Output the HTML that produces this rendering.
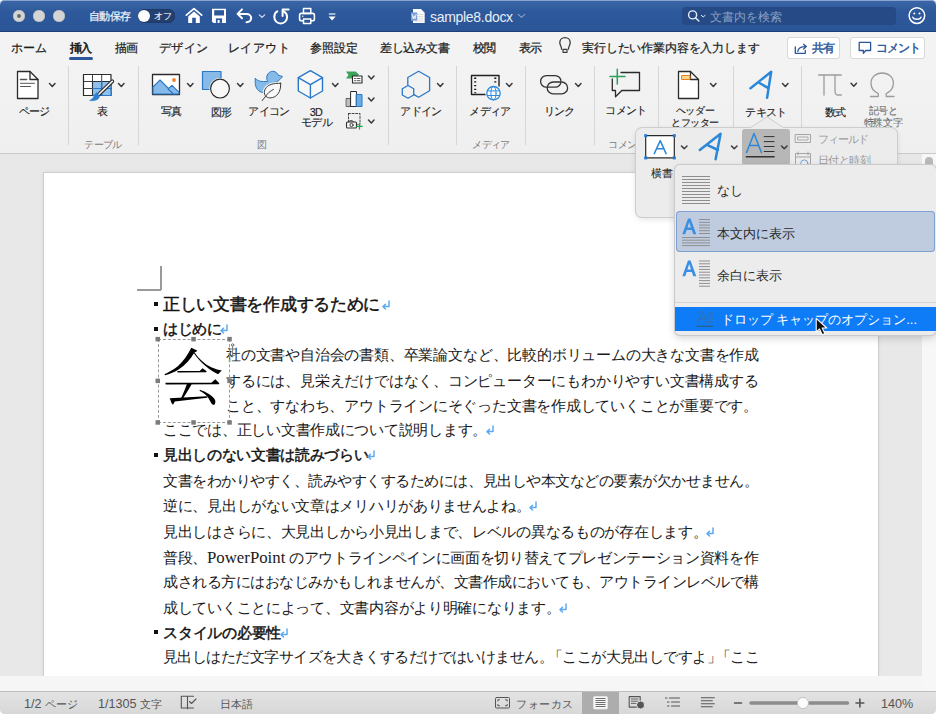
<!DOCTYPE html>
<html><head><meta charset="utf-8">
<style>
*{box-sizing:border-box}
html,body{margin:0;padding:0}
body{width:936px;height:714px;overflow:hidden;position:relative;background:#e8e8e8;font-family:"Liberation Sans",sans-serif;color:#222}
.a{position:absolute}
#title{left:0;top:0;width:936px;height:32px;background:linear-gradient(#3b66a7,#2d589b 40%,#2a5597);border-top-left-radius:4.5px;border-top-right-radius:4.5px;border-bottom:1px solid #1d3f78;box-shadow:inset 0 1px 0 rgba(200,215,240,.55)}
.tl{width:12px;height:12px;border-radius:50%;background:#d4d4d4;top:10px;box-shadow:inset 0 0 0 .5px #b0b0b0}
#tabs{left:0;top:32px;width:936px;height:30px;background:#f3f3f3}
.tab{top:39.5px;font-size:12px;letter-spacing:-0.55px;color:#1e1e1e;white-space:nowrap;line-height:16px;-webkit-text-stroke:0.25px #1e1e1e}
#ribbon{left:0;top:62px;width:936px;height:92px;background:linear-gradient(#f3f3f3,#efefef)}
#ribline{left:0;top:153px;width:936px;height:1px;background:#c9c9c9}
.sep{top:66px;width:1px;height:79px;background:#d6d6d6}
.lbl{font-size:10.8px;letter-spacing:-0.7px;color:#1e1e1e;white-space:nowrap;line-height:12px;text-align:center;-webkit-text-stroke:0.15px #1e1e1e}
.glbl{top:139px;font-size:10.3px;letter-spacing:-0.6px;color:#7a7a7a;white-space:nowrap;line-height:12px}
.chev{width:6px;height:6px;border-right:1.6px solid #404040;border-bottom:1.6px solid #404040;transform:rotate(45deg)}
#page{left:44px;top:172.5px;width:833.5px;height:503.5px;background:#fff;box-shadow:0 0 0 1px #cfcfcf,0 0 4px rgba(0,0,0,.12)}
.ln{position:absolute;font-size:14.7px;line-height:20px;color:#1a1a1a;white-space:nowrap}
.pp{font-family:"Liberation Serif",serif;font-size:16.8px;letter-spacing:0}
.j{text-align:justify;text-align-last:justify}
.h{font-weight:normal;color:#111;-webkit-text-stroke:0.45px #111}
.rt{display:inline-block;vertical-align:0px;margin-left:-2.3px}
.bul{width:4px;height:4px;background:#111}
#hscroll{left:0;top:676px;width:922px;height:15px;background:#f6f6f6}
#vscroll{left:922px;top:154px;width:14px;height:537px;background:#f7f7f7}
#status{left:0;top:690.5px;width:936px;height:23.5px;background:linear-gradient(#e3e3e3,#d8d8d8);border-top:1px solid #bdbdbd;border-bottom-left-radius:4.5px;border-bottom-right-radius:4.5px}
.st{top:697.5px;font-size:11.2px;color:#555;white-space:nowrap;line-height:13px;letter-spacing:0px}
.stn{font-size:12.6px;letter-spacing:0}
</style></head><body>
<!-- TITLE BAR -->
<div class="a" style="left:0;top:0;width:936px;height:10px;background:#fff"></div>
<div id="title" class="a"></div>
<div class="a tl" style="left:13px"></div>
<div class="a" style="left:17px;top:14px;width:4px;height:4px;border-radius:50%;background:#6a6a6a"></div>
<div class="a tl" style="left:33px"></div>
<div class="a tl" style="left:53px"></div>
<!-- TITLE ITEMS -->
<div class="a" style="left:88.5px;top:10px;font-size:10.6px;line-height:13px;color:#eef2f8;white-space:nowrap;-webkit-text-stroke:0.25px #eef2f8;letter-spacing:-0.5px">自動保存</div>
<div class="a" style="left:137.5px;top:9px;width:37.5px;height:13.5px;border-radius:7px;background:#24406f;box-shadow:inset 0 0 0 .5px #1b3360"></div>
<div class="a" style="left:137.6px;top:9.6px;width:12.4px;height:12.4px;border-radius:50%;background:#fbfbfb"></div>
<div class="a" style="left:153.5px;top:10.5px;font-size:8.6px;line-height:11px;color:#e8eef8;white-space:nowrap;-webkit-text-stroke:0.2px #e8eef8">オフ</div>
<div class="a" style="left:430px;top:7.5px;font-size:14px;line-height:18px;color:#e9eef6;white-space:nowrap;letter-spacing:-0.3px">sample8.docx</div>
<div class="a" style="left:682.2px;top:6.7px;width:213.8px;height:18.6px;border-radius:4px;background:#254a86"></div>
<div class="a" style="left:710px;top:9.5px;font-size:11.6px;line-height:14px;color:#8aa0c4;white-space:nowrap">文書内を検索</div>
<svg class="a" style="left:0;top:0" width="936" height="32" viewBox="0 0 936 32">
<g fill="none" stroke-linecap="round" stroke-linejoin="round">
<!-- home -->
<path d="M186.3 15.2L194 8.6L201.7 15.2" stroke="#fff" stroke-width="1.7"/>
<path d="M188.2 16.5L194 11.6L199.8 16.5V22.9H195.8V17.8H192.2V22.9H188.2Z" fill="#fff" stroke="none"/>
<!-- save -->
<path d="M212 8.8H226V22.9H213.5L212 21.4Z" fill="#fff"/>
<rect x="214.2" y="10.2" width="9.8" height="5.3" fill="#2c579a"/>
<path d="M215.9 22.9V18.4H222.1V22.9Z" fill="#2c579a"/>
<rect x="217.6" y="20" width="2" height="2.9" fill="#fff"/>
<!-- undo -->
<path d="M242 9.4L237.6 13.9L242 18.2" stroke="#fff" stroke-width="2"/>
<path d="M238 13.9H246.5C249.2 13.9 251.2 15.8 251.2 18.1C251.2 20.4 249.2 22.2 246.5 22.2" stroke="#fff" stroke-width="2"/>
<path d="M259.3 14.8L262 17.4L264.7 14.8" stroke="#dfe6f2" stroke-width="1.1"/>
<!-- redo -->
<path d="M277.3 11.4C275.2 12.5 274.3 14.6 274.3 17.1C274.3 20.7 277.2 23.5 280.7 23.5C284.2 23.5 287.1 20.7 287.1 17.1C287.1 14.6 285.8 12.4 283.8 11.3" stroke="#fff" stroke-width="2"/>
<path d="M282.6 16V9.4H288.6" stroke="#fff" stroke-width="2"/>
<!-- print -->
<rect x="303.5" y="8.5" width="7.3" height="5" stroke="#fff" stroke-width="1.5"/>
<rect x="299.6" y="13.4" width="14.8" height="7.4" rx="1.8" stroke="#fff" stroke-width="1.6"/>
<rect x="303.5" y="19" width="7.3" height="4.4" fill="#2c579a" stroke="#fff" stroke-width="1.5"/>
<circle cx="302.8" cy="16.2" r="0.7" fill="#fff"/>
<!-- customize -->
<path d="M328.8 14H335.4" stroke="#c8d4e8" stroke-width="1.5" stroke-linecap="butt"/>
<path d="M328.6 16.4H335.6L332.1 20.4Z" fill="#fff"/>
<!-- doc icon -->
<path d="M413 9H421L424.7 12.7V23H413Z" fill="#fbfbfb"/>
<path d="M416.5 14.5H423M416.5 16.7H423M416.5 18.9H423M416.5 21.1H423" stroke="#d8d8d8" stroke-width="0.9"/>
<rect x="411" y="12.4" width="6.2" height="8.3" fill="#7c9ed3"/>
<path d="M412.2 14.5L413.2 18.8L414.1 15.8L415 18.8L416 14.5" stroke="#fff" stroke-width="0.8"/>
<path d="M518.2 14.3L521.5 17.4L524.8 14.3" stroke="#8aa3cb" stroke-width="1.1"/>
<!-- search -->
<circle cx="692.6" cy="14.9" r="4" stroke="#e8eef8" stroke-width="1.4"/>
<path d="M695.5 17.8L698.8 21" stroke="#e8eef8" stroke-width="1.5"/>
<path d="M701.3 15.3L703.2 17L705.1 15.3" stroke="#e8eef8" stroke-width="1"/>
<!-- smiley -->
<circle cx="916.9" cy="15.6" r="7.8" stroke="#fff" stroke-width="1.5"/>
<circle cx="914.3" cy="13.4" r="1" fill="#fff"/>
<circle cx="919.5" cy="13.4" r="1" fill="#fff"/>
<path d="M912.8 17.2C914 20 919.8 20 921 17.2" stroke="#fff" stroke-width="1.4"/>
</g>
</svg>

<!-- /TITLE ITEMS -->

<!-- TABS -->
<div id="tabs" class="a"></div>
<div class="a tab" id="tab0" style="left:11.00px;letter-spacing:0.200px">ホーム</div>
<div class="a tab" id="tab1" style="left:69.5px;letter-spacing:-1.2px;-webkit-text-stroke:0.55px #1a1a1a">挿入</div>
<div class="a" style="left:69px;top:57px;width:24px;height:3px;border-radius:2px;background:#2b579a"></div>
<div class="a tab" id="tab2" style="left:115.00px;letter-spacing:-1.300px">描画</div>
<div class="a tab" id="tab3" style="left:159.00px;letter-spacing:0.367px">デザイン</div>
<div class="a tab" id="tab4" style="left:228.00px;letter-spacing:0.450px">レイアウト</div>
<div class="a tab" id="tab5" style="left:310.00px;letter-spacing:0.033px">参照設定</div>
<div class="a tab" id="tab6" style="left:380.00px;letter-spacing:-0.500px">差し込み文書</div>
<div class="a tab" id="tab7" style="left:473px;letter-spacing:-1.3px">校閲</div>
<div class="a tab" id="tab8" style="left:519.00px;letter-spacing:-1.300px">表示</div>
<div class="a tab" id="tab9" style="left:582.00px;letter-spacing:-0.157px">実行したい作業内容を入力します</div>

<!-- TABS EXTRA -->
<div class="a" style="left:786.5px;top:36.6px;width:53px;height:22.7px;border-radius:3px;background:#fff;box-shadow:inset 0 0 0 1px #d9d9d9"></div>
<div class="a" style="left:850.3px;top:36.6px;width:75.2px;height:22.7px;border-radius:3px;background:#fff;box-shadow:inset 0 0 0 1px #d9d9d9"></div>
<div class="a" style="left:812.3px;top:40.5px;font-size:12px;line-height:15px;color:#2b579a;white-space:nowrap;-webkit-text-stroke:0.45px #2b579a;letter-spacing:-1px">共有</div>
<div class="a" style="left:875.5px;top:40.5px;font-size:12px;line-height:15px;color:#2b579a;white-space:nowrap;-webkit-text-stroke:0.45px #2b579a;letter-spacing:-1px">コメント</div>
<svg class="a" style="left:0;top:30px" width="936" height="32" viewBox="0 30 936 32">
<g fill="none" stroke-linecap="round" stroke-linejoin="round">
<path d="M561.6 49.2C561.6 46.5 559.8 45.4 559.8 42.5C559.8 39.6 562.2 37.6 565 37.6C567.8 37.6 570.2 39.6 570.2 42.5C570.2 45.4 568.4 46.5 568.4 49.2" stroke="#3a3a3a" stroke-width="1.3"/>
<rect x="563" y="49.3" width="4" height="3" stroke="#3a3a3a" stroke-width="1.2"/>
<path d="M795.3 46.8V53.3H805.3V50.3" stroke="#2b579a" stroke-width="1.3"/>
<path d="M797.8 51.3C798.3 47.6 800.8 46.6 805.6 46.6" stroke="#2b579a" stroke-width="1.3"/>
<path d="M803.6 44.3L806.3 46.6L803.6 49" stroke="#2b579a" stroke-width="1.3"/>
<path d="M859.2 42.4H870.6V50.5H865.7L863.4 53.3V50.5H859.2Z" stroke="#2b579a" stroke-width="1.3"/>
</g>
</svg>

<!-- /TABS EXTRA -->
<!-- RIBBON -->
<div id="ribbon" class="a"></div>
<div id="ribline" class="a"></div>
<!-- RIBBON ITEMS -->
<div class="a lbl" style="left:-6px;top:104.8px;width:80px">ページ</div>
<div class="a lbl" style="left:62.5px;top:105px;width:80px">表</div>
<div class="a lbl" style="left:131px;top:105px;width:80px">写真</div>
<div class="a lbl" style="left:181.5px;top:105.5px;width:80px">図形</div>
<div class="a lbl" style="left:229px;top:104.5px;width:80px">アイコン</div>
<div class="a lbl" style="left:276px;top:105.5px;width:80px">3D</div>
<div class="a lbl" style="left:276.5px;top:115.7px;width:80px">モデル</div>
<div class="a lbl" style="left:381px;top:105px;width:80px">アドイン</div>
<div class="a lbl" style="left:450px;top:105px;width:80px">メディア</div>
<div class="a lbl" style="left:519px;top:105px;width:80px">リンク</div>
<div class="a lbl" style="left:586px;top:104px;width:80px">コメント</div>
<div class="a lbl" style="left:655px;top:105.3px;width:80px;font-size:10.2px;letter-spacing:-0.4px">ヘッダー</div>
<div class="a lbl" style="left:655px;top:116.5px;width:80px;font-size:10.2px;letter-spacing:-0.4px">とフッター</div>
<div class="a lbl" style="left:726px;top:105.7px;width:80px">テキスト</div>
<div class="a lbl" style="left:795.5px;top:105.7px;width:80px">数式</div>
<div class="a lbl" style="left:843px;top:105.3px;width:80px;color:#9a9a9a;font-size:10.2px;letter-spacing:-0.4px">記号と</div>
<div class="a lbl" style="left:843px;top:116.5px;width:80px;color:#9a9a9a;font-size:10.2px;letter-spacing:-0.4px">特殊文字</div>
<div class="a glbl" style="left:63px;top:138.5px;width:80px;text-align:center">テーブル</div>
<div class="a glbl" style="left:222px;top:138.5px;width:80px;text-align:center">図</div>
<div class="a glbl" style="left:451px;top:138.5px;width:80px;text-align:center">メディア</div>
<div class="a glbl" style="left:587px;top:138.5px;width:80px;text-align:center">コメント</div>
<div class="a sep" style="left:68.0px"></div>
<div class="a sep" style="left:137.5px"></div>
<div class="a sep" style="left:387.5px"></div>
<div class="a sep" style="left:456.0px"></div>
<div class="a sep" style="left:525.0px"></div>
<div class="a sep" style="left:594.0px"></div>
<div class="a sep" style="left:658.0px"></div>
<div class="a sep" style="left:732.5px"></div>
<div class="a sep" style="left:801.0px"></div>
<svg class="a" style="left:0;top:0" width="936" height="160" viewBox="0 0 936 160">
<g fill="none" stroke-linecap="round" stroke-linejoin="round">
<!-- page icon -->
<path d="M17.5 71.5H30L38 79.5V98.5H17.5Z" fill="#fff" stroke="#2b2b2b" stroke-width="1.3"/>
<path d="M30 71.5V79.5H38" stroke="#2b2b2b" stroke-width="1.3"/>
<path d="M20.5 79.5H26.5" stroke="#555" stroke-width="1.6"/>
<path d="M20.5 83.3H34.5M20.5 86.5H30.5" stroke="#555" stroke-width="1"/>
<!-- table icon -->
<rect x="83.5" y="74.5" width="27.5" height="21" fill="#fff" stroke="#2b2b2b" stroke-width="1.2"/>
<rect x="92.5" y="81.5" width="18.5" height="14" fill="#8ec0ee" stroke="#2a78c8" stroke-width="1.2"/>
<path d="M92.5 74.5V95.5M101.7 74.5V95.5M83.5 81.5H111M83.5 88.5H111" stroke="#2b2b2b" stroke-width="0.9"/>
<path d="M101.7 81.5V95.5M92.5 88.5H111" stroke="#2a78c8" stroke-width="1"/>
<path d="M98.3 94.8L112.3 81.3" stroke="#333" stroke-width="3.8"/><path d="M98.3 94.8L112.3 81.3" stroke="#fff" stroke-width="1.5"/>
<path d="M96.6 93C99.6 94.6 100 97.6 97.8 99.2C95.6 100.6 92.2 100.9 89.6 100.5C92 99.3 93.4 97.8 94.2 95.8C94.7 94.4 95.5 93.4 96.6 93Z" fill="#2f7fd0" stroke="#2f7fd0" stroke-width="0.6"/>
<!-- photo icon -->
<rect x="152.5" y="74.5" width="27" height="20" fill="#fff" stroke="#2b2b2b" stroke-width="1.3"/>
<path d="M153 87L160 80L174 94H153Z" fill="#86bbe9" stroke="#2a78c8" stroke-width="1.1"/>
<path d="M168 89L172 85.3L179 92.3V94H173.5Z" fill="#86bbe9" stroke="#2a78c8" stroke-width="1.1"/>
<circle cx="174" cy="80" r="2" fill="#f0883a"/>
<!-- shapes icon -->
<rect x="202.5" y="71.5" width="18.5" height="18" fill="#86bbe9" stroke="#2a78c8" stroke-width="1.2"/>
<circle cx="220" cy="88.6" r="10.6" fill="#f3f3f3" stroke="none"/>
<circle cx="220" cy="88.6" r="9.4" fill="#f8f8f8" stroke="#2b2b2b" stroke-width="1.2"/>
<!-- icons (duck + leaf) -->
<path d="M255.4 78.4C256.5 80.2 259.5 81.6 263.5 81.6L267.6 81.4C266.9 80.2 266.6 78.8 266.7 77.3C267 74 269.6 71.3 272.8 71.3C275.5 71.3 277.6 73 278.3 75.3L282.4 76.4C281.2 78.6 279 80.6 276.5 81.8C274 83 270 84 267 86.5C265 88.5 264.5 91 262.8 92.6C258.5 91.8 255.6 88.3 255.3 84Z" fill="#86bbe9" stroke="#2a78c8" stroke-width="1" stroke-linejoin="round"/>
<path d="M280.7 83.3C273.5 83.1 267.4 84.4 265 89.5C263 94 265.8 98 270.2 97.9C277 97.8 281.2 91.5 280.7 83.3Z" fill="#f8f8f8" stroke="#f3f3f3" stroke-width="3"/>
<path d="M280.7 83.3C273.5 83.1 267.4 84.4 265 89.5C263 94 265.8 98 270.2 97.9C277 97.8 281.2 91.5 280.7 83.3Z" fill="#f8f8f8" stroke="#3a3a3a" stroke-width="1"/>
<path d="M273.4 89.4C270 91.2 267.5 93.5 266 95.8L262.2 100.6" stroke="#3a3a3a" stroke-width="1"/>
<!-- 3D cube -->
<path d="M310.4 70.7L322.5 77.7V91L310.4 98L298.3 91V77.7Z" fill="#f8f8f8" stroke="#2a78c8" stroke-width="1.4"/>
<path d="M298.3 77.7L310.4 84.7L322.5 77.7M310.4 84.7V98" stroke="#2a78c8" stroke-width="1.4"/>
<!-- smartart -->
<path d="M346 71.5H355.5L359 74.5L355.5 78.5H346L348.5 75Z" fill="#3aa357" stroke="none"/>
<rect x="352.5" y="76" width="9.5" height="7" fill="#fff" stroke="#2b2b2b" stroke-width="1.1"/>
<path d="M354.5 78.5H355.5M357 78.5H360M354.5 80.7H355.5M357 80.7H360" stroke="#2b2b2b" stroke-width="0.8"/>
<!-- chart -->
<rect x="346.5" y="98.5" width="4.5" height="8" fill="#bdbdbd" stroke="#555" stroke-width="0.9"/>
<rect x="351" y="91.5" width="5.5" height="15" fill="#fff" stroke="#2b2b2b" stroke-width="1"/>
<rect x="356.5" y="94.5" width="5.5" height="12" fill="#6aaee8" stroke="#2a78c8" stroke-width="1"/>
<!-- screenshot -->
<rect x="348.5" y="113.5" width="11.5" height="11" fill="none" stroke="#444" stroke-width="1" stroke-dasharray="2 1.6"/>
<rect x="346.5" y="122" width="10" height="6" rx="1" fill="#f3f3f3" stroke="#333" stroke-width="1.1"/>
<path d="M348.5 122L349.5 120.8H352.5L353.5 122" stroke="#333" stroke-width="1"/>
<circle cx="351.5" cy="125" r="1.6" stroke="#333" stroke-width="0.9"/>
<path d="M359.5 123.5V129M356.8 126.3H362.2" stroke="#1fa64a" stroke-width="1.3"/>
<!-- add-in -->
<path d="M407.8 84.5V77.5L418.6 71.3L429.6 77.5V90.8L418.6 97.2L414 94.6" stroke="#2a78c8" stroke-width="1.3"/>
<path d="M408 85.5L413.7 88.7V95L408 98.2L402.3 95V88.7Z" stroke="#2a78c8" stroke-width="1.3"/>
<!-- media -->
<path d="M492 94.5H471.5V75.5H499V86" stroke="#222" stroke-width="1.4"/>
<path d="M475.2 77.6V78.9M475.2 81.3V82.6M475.2 85V86.3M475.2 88.7V90M475.2 92.2V93.3M495.3 77.6V78.9M495.3 81.3V82.6" stroke="#111" stroke-width="2" stroke-linecap="butt"/>
<circle cx="493.5" cy="93.2" r="8.2" fill="#f3f3f3" stroke="none"/>
<circle cx="493.5" cy="93.2" r="6.7" fill="#fff" stroke="#2f8ae0" stroke-width="1.3"/>
<ellipse cx="493.5" cy="93.2" rx="2.6" ry="6.7" stroke="#2f8ae0" stroke-width="1"/>
<path d="M487.3 90.9H499.7M487.3 95.5H499.7" stroke="#2f8ae0" stroke-width="1"/>
<!-- link -->
<rect x="540.6" y="75.6" width="20.4" height="11.6" rx="5.8" stroke="#333" stroke-width="1.3"/>
<rect x="547.2" y="82" width="20.4" height="11.8" rx="5.9" fill="none" stroke="#f3f3f3" stroke-width="2.6" stroke-dasharray="0 9 30 100"/>
<rect x="547.2" y="82" width="20.4" height="11.8" rx="5.9" stroke="#333" stroke-width="1.3"/>
<!-- comment -->
<path d="M621 72.5H639.5V90.5H621.8L615.5 96.8V90.5H612.3V79" stroke="#2b2b2b" stroke-width="1.3"/>
<path d="M610 76.4H625M617.3 69.3V84" stroke="#27a35a" stroke-width="1.5"/>
<!-- header footer -->
<path d="M678.5 71.5H690.5L698.5 79.5V98.5H678.5Z" fill="#fff" stroke="#2b2b2b" stroke-width="1.3"/>
<path d="M690.5 71.5V79.5H698.5" stroke="#2b2b2b" stroke-width="1.3"/>
<rect x="682" y="75.5" width="8" height="4" fill="#f7d88a" stroke="#e8801e" stroke-width="1"/>
<!-- text A -->
<path d="M750.5 88.2L771.2 71.8L767.1 97.8M758.6 82.5L768.3 88.2" stroke="#2b88d8" stroke-width="2.5"/>
<!-- pi -->
<path d="M818.6 75H841.3M824 75V95M835 75V91.5C835 93.8 836.5 95 838.5 95H841.3" stroke="#9c9c9c" stroke-width="1.3"/>
<!-- omega -->
<path d="M870.5 96.5H878.3V93.6C874 91.5 871 87.5 871 83.2C871 77 876 73 882.2 73C888.4 73 893.4 77 893.4 83.2C893.4 87.5 890.4 91.5 886.2 93.6V96.5H894" stroke="#9c9c9c" stroke-width="1.3"/>
<!-- chevrons -->
<g stroke="#3a3a3a" stroke-width="1.5">
<path d="M49.5 83.5L52.3 86.5L55 83.5"/>
<path d="M118.5 83.5L121.3 86.5L124 83.5"/>
<path d="M187.5 83.5L190.3 86.5L193 83.5"/>
<path d="M237.5 83.5L240.3 86.5L243 83.5"/>
<path d="M332.5 83.5L335.3 86.5L338 83.5"/>
<path d="M368.5 76L371.3 79L374 76"/>
<path d="M368.5 98L371.3 101L374 98"/>
<path d="M368.5 120L371.3 123L374 120"/>
<path d="M437.5 83.5L440.3 86.5L443 83.5"/>
<path d="M506.5 83.5L509.3 86.5L512 83.5"/>
<path d="M575.5 83.5L578.3 86.5L581 83.5"/>
<path d="M710.5 83.5L713.3 86.5L716 83.5"/>
<path d="M782.5 83.5L785.3 86.5L788 83.5"/>
<path d="M851 83.3L853.8 86.3L856.5 83.3"/>
</g>
</g>
</svg>

<!-- /RIBBON ITEMS -->

<!-- DOC AREA -->
<div id="page" class="a"></div>
<div id="hscroll" class="a"></div>
<div id="vscroll" class="a"></div>
<div class="a" style="left:925px;top:157px;width:8px;height:140px;border-radius:4px;background:#b9b9b9"></div>


<!-- DOCUMENT TEXT -->
<div class="a" style="left:137px;top:289px;width:24px;height:1.5px;background:#9a9a9a"></div>
<div class="a" style="left:160px;top:266px;width:1.5px;height:24px;background:#9a9a9a"></div>
<div class="a bul" style="left:154px;top:302px"></div>
<div class="a bul" style="left:154px;top:327px"></div>
<div class="a bul" style="left:154px;top:453px"></div>
<div class="a bul" style="left:154px;top:630px"></div>
<!-- DOCLINES -->
<div class="ln h" style="left:163px;top:295px;font-size:16.7px"><span style="letter-spacing:-0.308px">正しい文書を作成するために</span><svg class="rt" style="margin-left:1px" width="10" height="10" viewBox="0 0 10 10"><path d="M8 1V6.6H2.2M4.5 4.2L2 6.6L4.5 9" fill="none" stroke="#5eaaf2" stroke-width="1.5" stroke-linecap="round" stroke-linejoin="round"/></svg></div>
<div class="ln h" style="left:163px;top:319px;font-size:14.7px"><span style="letter-spacing:-0.375px">はじめに</span><svg class="rt" width="10" height="10" viewBox="0 0 10 10"><path d="M8 1V6.6H2.2M4.5 4.2L2 6.6L4.5 9" fill="none" stroke="#5eaaf2" stroke-width="1.5" stroke-linecap="round" stroke-linejoin="round"/></svg></div>
<div class="ln" style="left:226px;top:345px;font-size:14.7px"><span style="letter-spacing:-0.194px">社の文書や自治会の書類、卒業論文など、比較的ボリュームの大きな文書を作成</span></div>
<div class="ln" style="left:226px;top:371px;font-size:14.7px"><span style="letter-spacing:-0.208px">するには、見栄えだけではなく、コンピューターにもわかりやすい文書構成する</span></div>
<div class="ln" style="left:226px;top:396px;font-size:14.7px"><span style="letter-spacing:-0.222px">こと、すなわち、アウトラインにそぐった文書を作成していくことが重要です。</span></div>
<div class="ln" style="left:163px;top:420px;font-size:14.7px"><span style="letter-spacing:-0.273px">ここでは、正しい文書作成について説明します。</span><svg class="rt" width="10" height="10" viewBox="0 0 10 10"><path d="M8 1V6.6H2.2M4.5 4.2L2 6.6L4.5 9" fill="none" stroke="#5eaaf2" stroke-width="1.5" stroke-linecap="round" stroke-linejoin="round"/></svg></div>
<div class="ln h" style="left:163px;top:445px;font-size:14.7px"><span style="letter-spacing:-0.321px">見出しのない文書は読みづらい</span><svg class="rt" width="10" height="10" viewBox="0 0 10 10"><path d="M8 1V6.6H2.2M4.5 4.2L2 6.6L4.5 9" fill="none" stroke="#5eaaf2" stroke-width="1.5" stroke-linecap="round" stroke-linejoin="round"/></svg></div>
<div class="ln" style="left:163px;top:471px;font-size:14.7px"><span style="letter-spacing:-0.476px">文書をわかりやすく、読みやすくするためには、見出しや本文などの要素が欠かせません。</span></div>
<div class="ln" style="left:163px;top:496px;font-size:14.7px"><span style="letter-spacing:-0.300px">逆に、見出しがない文章はメリハリがありませんよね。</span><svg class="rt" width="10" height="10" viewBox="0 0 10 10"><path d="M8 1V6.6H2.2M4.5 4.2L2 6.6L4.5 9" fill="none" stroke="#5eaaf2" stroke-width="1.5" stroke-linecap="round" stroke-linejoin="round"/></svg></div>
<div class="ln" style="left:163px;top:521.5px;font-size:14.7px"><span style="letter-spacing:-0.284px">見出しはさらに、大見出しから小見出しまで、レベルの異なるものが存在します。</span><svg class="rt" width="10" height="10" viewBox="0 0 10 10"><path d="M8 1V6.6H2.2M4.5 4.2L2 6.6L4.5 9" fill="none" stroke="#5eaaf2" stroke-width="1.5" stroke-linecap="round" stroke-linejoin="round"/></svg></div>
<div class="ln" style="left:163px;top:547.5px;font-size:14.7px"><span style="letter-spacing:-0.331px">普段、<span class="pp">PowerPoint</span> のアウトラインペインに画面を切り替えてプレゼンテーション資料を作</span></div>
<div class="ln" style="left:163px;top:572px;font-size:14.7px"><span style="letter-spacing:-0.463px">成される方にはおなじみかもしれませんが、文書作成においても、アウトラインレベルで構</span></div>
<div class="ln" style="left:163px;top:597.5px;font-size:14.7px"><span style="letter-spacing:-0.278px">成していくことによって、文書内容がより明確になります。</span><svg class="rt" width="10" height="10" viewBox="0 0 10 10"><path d="M8 1V6.6H2.2M4.5 4.2L2 6.6L4.5 9" fill="none" stroke="#5eaaf2" stroke-width="1.5" stroke-linecap="round" stroke-linejoin="round"/></svg></div>
<div class="ln h" style="left:163px;top:622.5px;font-size:14.7px"><span style="letter-spacing:-0.250px">スタイルの必要性</span><svg class="rt" width="10" height="10" viewBox="0 0 10 10"><path d="M8 1V6.6H2.2M4.5 4.2L2 6.6L4.5 9" fill="none" stroke="#5eaaf2" stroke-width="1.5" stroke-linecap="round" stroke-linejoin="round"/></svg></div>
<div class="ln" style="left:163px;top:647px;font-size:14.7px"><span style="letter-spacing:-0.550px">見出しはただ文字サイズを大きくするだけではいけません<span style="letter-spacing:-6px">。</span>「ここが大見出しですよ<span style="letter-spacing:-6px">」</span>「ここ</span></div>
<!-- /DOCLINES -->
<!-- DROP CAP FRAME -->
<div class="a" style="left:157.7px;top:339px;width:72px;height:83.5px;border:1px dashed #9a9a9a"></div>
<svg class="a" style="left:160px;top:344px" width="66" height="66" viewBox="0 0 714 714"><g fill="#000">
<path d="M338 40L402 70L395 80L372 92C330 170 270 230 205 272C160 300 105 325 55 338L48 326C100 305 150 275 195 238C250 190 300 120 338 40Z"/>
<path d="M372 88C420 160 480 215 560 255C600 272 640 282 668 288L628 328C560 292 500 250 450 200C415 165 385 125 362 95Z"/>
<path d="M188 292L430 292L460 262L505 296L500 306L190 308Z"/>
<path d="M58 420L555 420L598 382L642 424L638 436L62 438Z"/>
<path d="M292 430L345 430C320 480 280 540 250 588L228 588C250 535 275 480 292 430Z"/>
<path d="M105 588L505 565L512 582L160 622L140 658L126 640Z"/>
<path d="M432 496C500 520 560 555 590 595C605 618 602 645 585 660C565 662 552 640 540 615C520 570 480 530 428 506Z"/>
</g></svg>
<svg class="a" style="left:150px;top:330px" width="100" height="100" viewBox="150 330 100 100">
<g fill="#7b7b7b"><rect x="155.5" y="336.9" width="4.5" height="4.5"/><rect x="191.3" y="336.9" width="4.5" height="4.5"/><rect x="227.3" y="336.9" width="4.5" height="4.5"/><rect x="155.5" y="378.6" width="4.5" height="4.5"/><rect x="227.3" y="378.6" width="4.5" height="4.5"/><rect x="155.5" y="420.2" width="4.5" height="4.5"/><rect x="191.3" y="420.2" width="4.5" height="4.5"/><rect x="227.3" y="420.2" width="4.5" height="4.5"/></g>
<g fill="none" stroke="#6a6a6a" stroke-width="0.9" stroke-linecap="round"><circle cx="232.6" cy="345" r="1.2"/><path d="M232.6 346.2V357M229.5 349H235.7M229 353.5C229.5 356.5 235.7 356.5 236.2 353.5"/></g>
</svg>
<!-- STATUS -->
<div class="a" style="left:0;top:704px;width:936px;height:10px;background:#fff"></div>
<div id="status" class="a"></div>
<!-- STATUS EXTRA -->
<div class="a" style="left:582.4px;top:691.5px;width:36.3px;height:22.5px;background:#adadad"></div>
<svg class="a" style="left:0;top:690px" width="936" height="24" viewBox="0 690 936 24">
<g fill="none" stroke-linecap="round" stroke-linejoin="round">
<!-- proofing -->
<path d="M187.5 697V708.7M181.3 696.3H187.5V708H181.3Z" stroke="#555" stroke-width="1.1"/>
<path d="M187.5 696.3H193.5M187.5 708H193.5" stroke="#555" stroke-width="1.1"/>
<path d="M189.5 701.5L191.5 703.5L196 699" stroke="#555" stroke-width="1.1"/>
<!-- focus -->
<rect x="495.5" y="697.5" width="14" height="10.5" rx="1" stroke="#555" stroke-width="1"/>
<path d="M497.8 701V699.8H499.5M505.5 699.8H507.2V701M507.2 704.5V705.7H505.5M499.5 705.7H497.8V704.5" stroke="#555" stroke-width="1"/>
<!-- print layout (active) -->
<rect x="593.5" y="696.5" width="14" height="12.5" rx="1.2" fill="#f6f6f6" stroke="#e6e6e6" stroke-width="0.8"/>
<path d="M595.5 698.5H605.5M595.5 700.5H605.5M595.5 702.5H605.5M595.5 704.5H605.5M595.5 706.5H605.5" stroke="#6f6f6f" stroke-width="1" stroke-linecap="butt"/>
<!-- web layout -->
<rect x="629.2" y="696.6" width="11" height="10.5" stroke="#555" stroke-width="1.1"/>
<path d="M631.3 699H638M631.3 701.2H638M631.3 703.4H636" stroke="#555" stroke-width="0.9"/>
<circle cx="640.5" cy="705" r="4" fill="#555" stroke="#e2e2e2" stroke-width="1"/>
<!-- outline -->
<path d="M665.5 698H667M669.5 698H679.5M667.5 702H669M671.5 702H679.5M667.5 706H669M671.5 706H679.5" stroke="#555" stroke-width="1.1"/>
<!-- draft -->
<path d="M701.3 697.8H714.3M701.3 700.8H712.3M701.3 703.8H714.3M701.3 706.8H712.3" stroke="#555" stroke-width="1.1"/>
<!-- zoom -->
<path d="M734.5 703H741.5" stroke="#555" stroke-width="1.6"/>
<path d="M751 703H847.5" stroke="#8c8c8c" stroke-width="3.5"/>
<path d="M856 703H863.8M859.9 699.1V706.9" stroke="#555" stroke-width="1.6"/>
<circle cx="803" cy="703" r="5.6" fill="#fbfbfb" stroke="#b9b9b9" stroke-width="0.8"/>
</g>
</svg>

<!-- /STATUS EXTRA -->
<div class="a st" style="left:24px"><span class="stn">1/2</span> ページ</div>
<div class="a st" style="left:98px"><span class="stn">1/1305</span> 文字</div>
<div class="a st" style="left:220px">日本語</div>
<div class="a st" style="left:516px;letter-spacing:0.5px">フォーカス</div>
<div class="a st stn" style="left:881px;top:697.5px">140%</div>
<!-- POPUP PANEL -->
<div class="a" style="left:636px;top:127.6px;width:261px;height:89.6px;border-radius:6px;background:#ececec;box-shadow:0 0 0 1px #cdcdcd,0 2px 6px rgba(0,0,0,.12)"></div>
<svg class="a" style="left:746px;top:115px" width="42" height="14" viewBox="746 115 42 14"><path d="M749 128.6L767 116.8L785 128.6Z" fill="#ececec" stroke="#cdcdcd" stroke-width="1"/><rect x="747" y="128" width="40" height="2" fill="#ececec"/></svg>
<div class="a" style="left:742px;top:129px;width:47.8px;height:35.5px;border-radius:3px;background:#b7b7b7"></div>
<div class="a" style="left:651px;top:168px;font-size:11px;line-height:11px;color:#262626;white-space:nowrap">横書き</div>
<div class="a" style="left:818px;top:132.5px;font-size:11.2px;line-height:13px;color:#9a9a9a;white-space:nowrap;letter-spacing:-0.9px">フィールド</div>
<div class="a" style="left:818px;top:153.5px;font-size:11.2px;line-height:13px;color:#9a9a9a;white-space:nowrap;letter-spacing:-0.6px">日付と時刻</div>
<svg class="a" style="left:636px;top:120px" width="262" height="100" viewBox="636 120 262 100">
<g fill="none" stroke-linecap="round" stroke-linejoin="round">
<rect x="645.7" y="135.7" width="28.6" height="22.2" fill="#fff" stroke="#2b2b2b" stroke-width="1.2"/>
<g fill="#1f7ad6"><rect x="644.2" y="134.2" width="3" height="3"/><rect x="672.8" y="134.2" width="3" height="3"/><rect x="644.2" y="156.4" width="3" height="3"/><rect x="672.8" y="156.4" width="3" height="3"/></g>
<path d="M654.3 153.6L660.2 140.6L666.1 153.6M656.4 148.8H664" stroke="#2b88d8" stroke-width="1.5"/>
<path d="M699.8 150L720.6 133.8L715.6 159.2M707 144.8L718 150" stroke="#2b88d8" stroke-width="2.5"/>
<path d="M746.6 152.5L754 133.5L761.4 152.5M749.2 145.6H758.8" stroke="#2b88d8" stroke-width="1.5"/>
<path d="M764.2 136.6H774.1M764.2 141.6H774.1M764.2 146.5H774.1M764.2 151.5H774.1" stroke="#333" stroke-width="1"/>
<path d="M746.3 156.8H774.1" stroke="#333" stroke-width="1.5"/>
<g stroke="#3a3a3a" stroke-width="1.5"><path d="M681.5 146L684.2 148.8L687 146"/><path d="M731.5 146L734.2 148.8L737 146"/><path d="M781.5 146L784.2 148.8L787 146"/></g>
<rect x="795.5" y="134.5" width="15" height="8" stroke="#a5a5a5" stroke-width="1"/>
<rect x="798" y="137" width="10" height="3" stroke="#a5a5a5" stroke-width="0.9"/>
<path d="M795.5 156V153.5H810.5V170M795.5 156V170" stroke="#a5a5a5" stroke-width="1"/>
<path d="M798 152V155M808 152V155M795.5 157H810.5" stroke="#a5a5a5" stroke-width="1"/>
<circle cx="804.3" cy="163.5" r="3.6" fill="#ececec" stroke="#6aa6e0" stroke-width="1"/>
</g>
</svg>
<!-- DROPDOWN MENU -->
<div class="a" style="left:675px;top:164.5px;width:260.5px;height:170.8px;border-radius:5px;background:#ececec;box-shadow:0 0 0 1px #c9c9c9,0 3px 8px rgba(0,0,0,.18)"></div>
<div class="a" style="left:675.5px;top:211.4px;width:259.5px;height:41.1px;border-radius:4px;background:#bfcce0;box-shadow:inset 0 0 0 1px #7fa0d2"></div>
<div class="a" style="left:675px;top:301.5px;width:260.5px;height:1px;background:#d3d3d3"></div>
<div class="a" style="left:675px;top:307.2px;width:260.5px;height:23.8px;background:#0d7cf6"></div>
<div class="a" style="left:716.8px;top:183px;font-size:13px;line-height:15px;color:#2a2a2a;white-space:nowrap">なし</div>
<div class="a" style="left:716.7px;top:226.3px;font-size:13px;line-height:15px;color:#2a2a2a;white-space:nowrap">本文内に表示</div>
<div class="a" style="left:716.7px;top:268px;font-size:13px;line-height:15px;color:#2a2a2a;white-space:nowrap">余白に表示</div>
<div class="a" style="left:720.6px;top:311.6px;font-size:13px;line-height:15px;color:#fff;white-space:nowrap">ドロップ キャップのオプション...</div>
<svg class="a" style="left:675px;top:164px" width="262" height="172" viewBox="675 164 262 172">
<g fill="none">
<path d="M682 176.5H710M682 179.5H710M682 182.5H710M682 185.5H710M682 188.5H710M682 191.5H710M682 194.5H710M682 197.5H710M682 200.5H710M682 203.5H710" stroke="#8e8e8e" stroke-width="1"/>
<path d="M682.3 234.3L688 218.6H690.5L696.3 234.3H693.3L691.8 230H686.7L685.2 234.3ZM687.5 227.5H691L689.2 222Z" fill="#3b8fe2"/>
<path d="M699 219.5H710M699 222.3H710M699 225.1H710M699 227.9H710M699 230.7H710M699 233.5H710M682 237.5H710M682 240.2H710M682 242.9H710M682 245.6H710" stroke="#8e8e8e" stroke-width="1"/>
<path d="M682.3 276.2L688 260.5H690.5L696.3 276.2H693.3L691.8 271.9H686.7L685.2 276.2ZM687.5 269.4H691L689.2 263.9Z" fill="#3b8fe2"/>
<path d="M699 261H710M699 263.8H710M699 266.6H710M699 269.4H710M699 272.2H710M699 275H710M699 277.8H710M699 280.6H710M699 283.4H710M699 286.2H710" stroke="#8e8e8e" stroke-width="1"/>
<path d="M697.5 323.5L702.3 311.3L707 323.5M699.2 319H705.4" stroke="#3d6f9e" stroke-width="1" stroke-linecap="round"/>
<path d="M707.5 313H713M707.5 316H713M707.5 319H713M707.5 322H713" stroke="#3d6f9e" stroke-width="0.9"/>
<path d="M696.5 326.3H713.3" stroke="#2f5a85" stroke-width="1.2"/>
<path d="M816.2 318.3V332.2L819.5 329L822.3 334.8L824.9 333.6L822.2 328H826.8Z" fill="#111" stroke="#fff" stroke-width="1.1" stroke-linejoin="round"/>
</g>
</svg>

</body></html>
